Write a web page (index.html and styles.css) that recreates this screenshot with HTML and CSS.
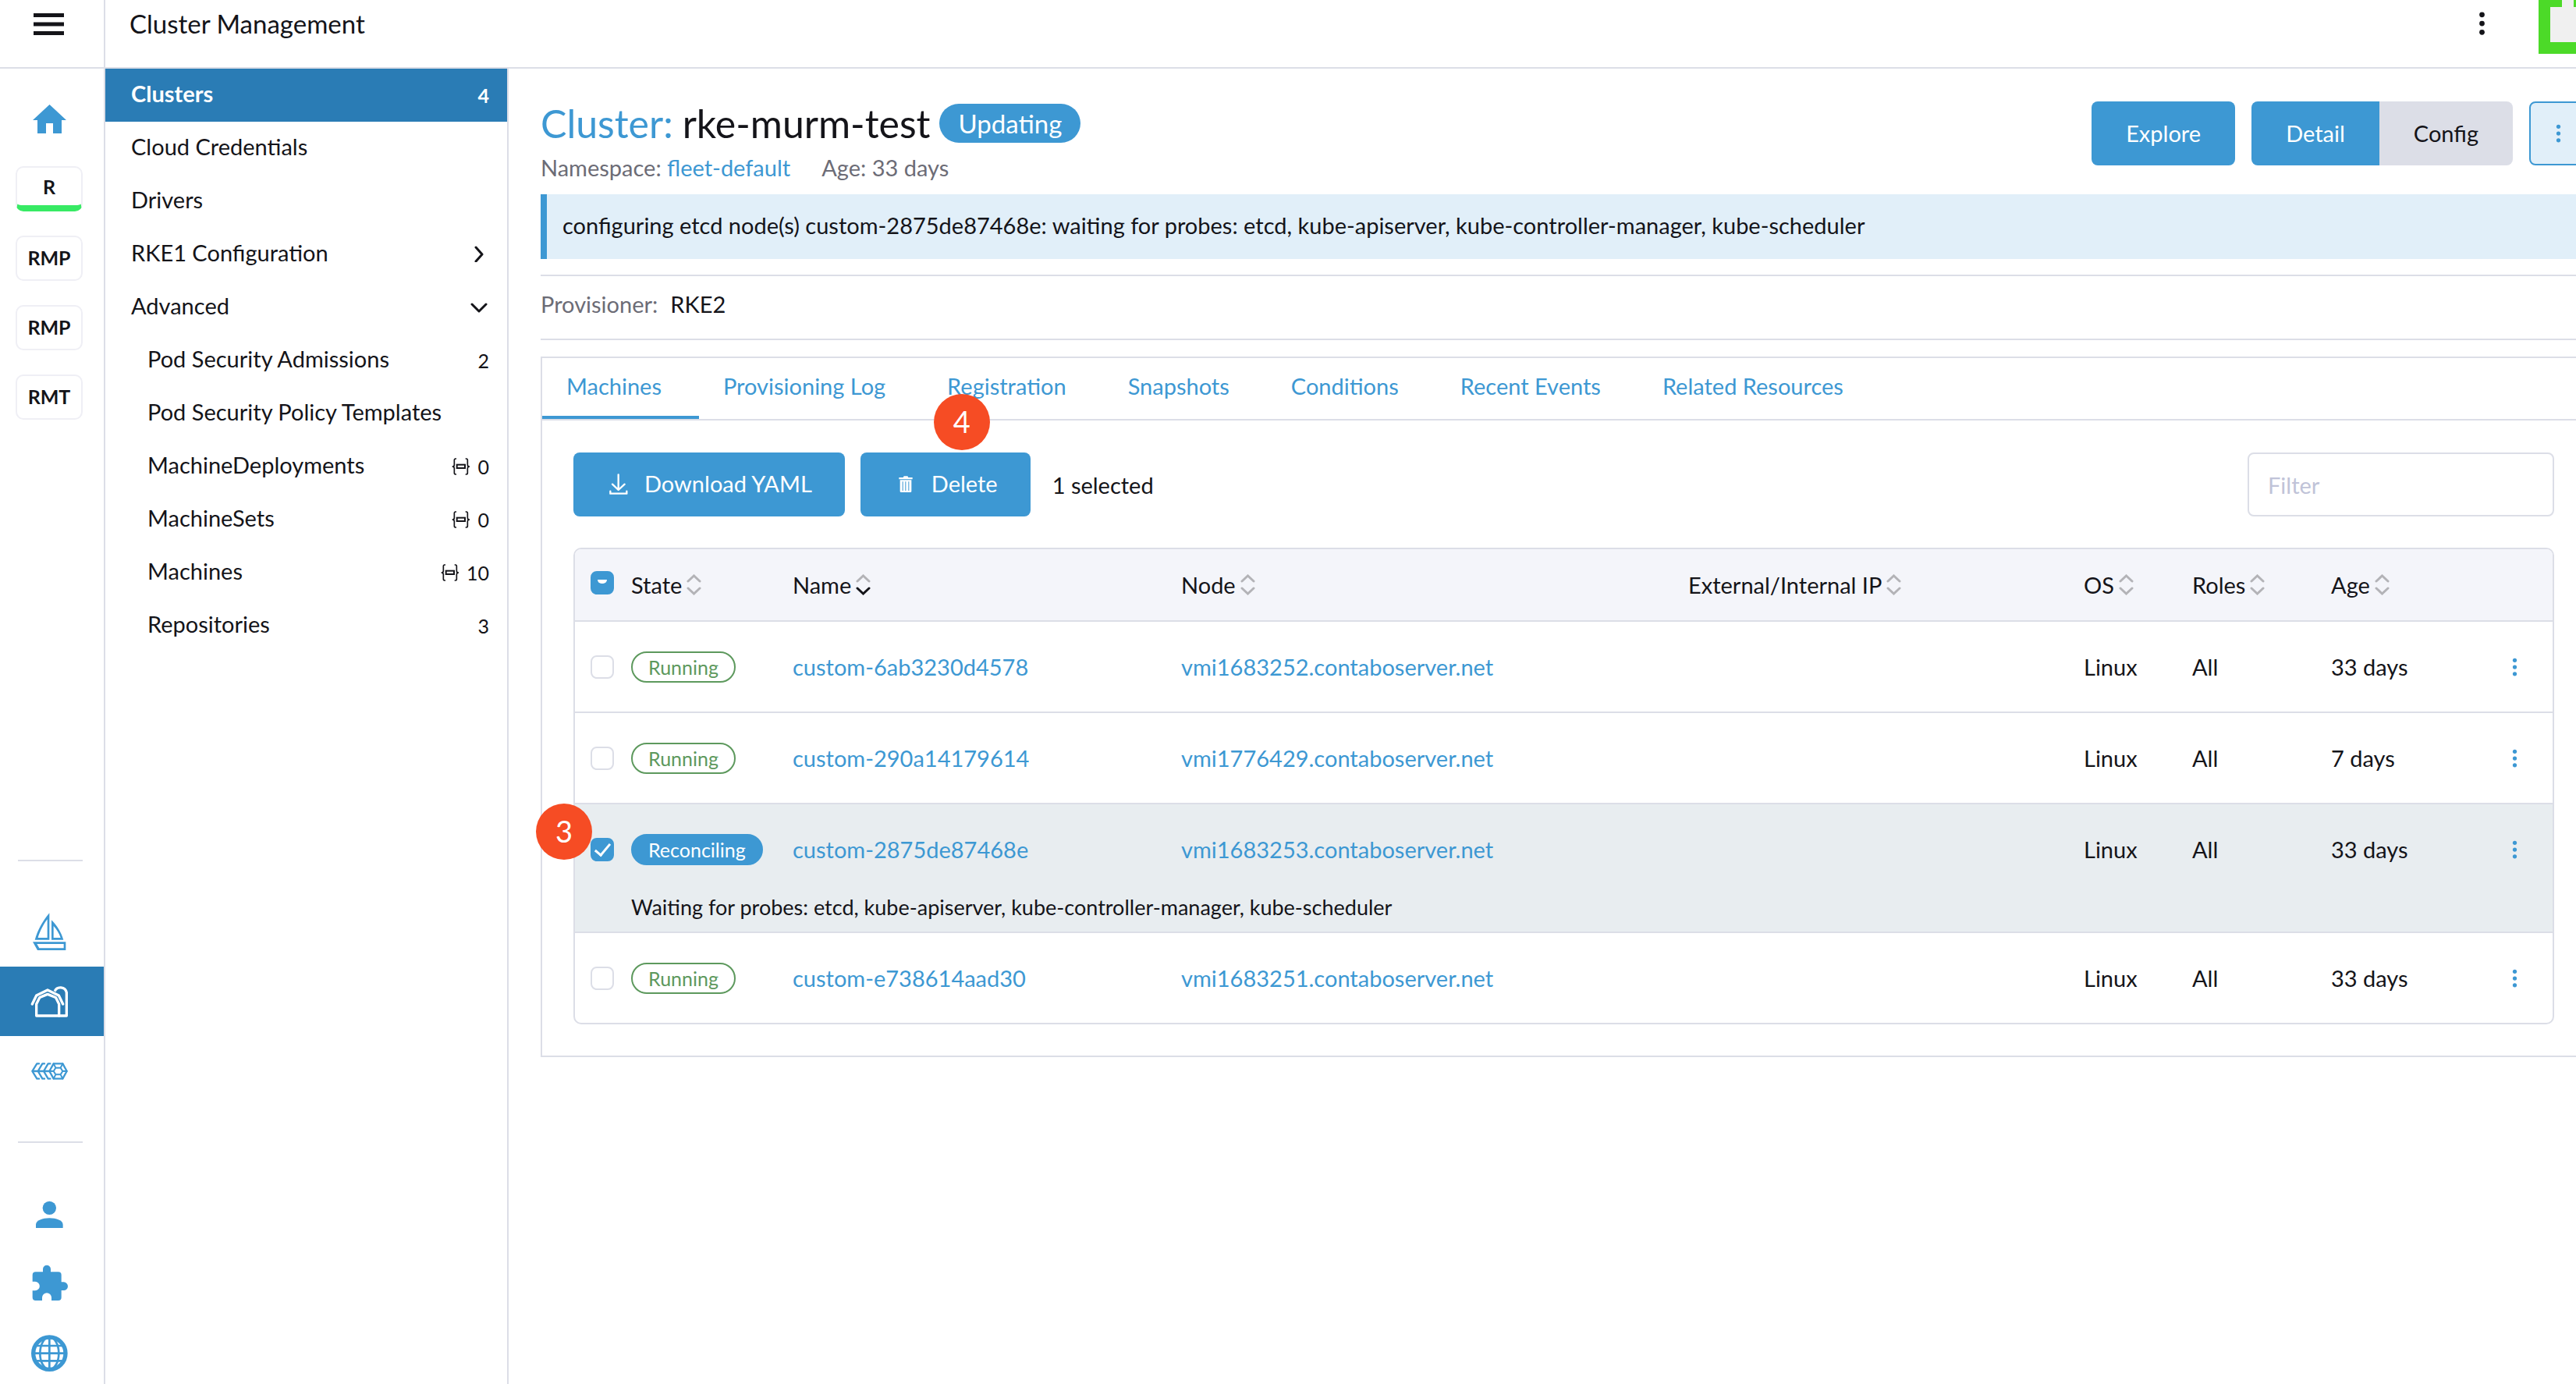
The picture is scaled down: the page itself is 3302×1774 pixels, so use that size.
FILE: index.html
```html
<!DOCTYPE html>
<html lang="en">
<head>
<meta charset="utf-8">
<title>Cluster Management</title>
<link rel="stylesheet" href="styles.css">
</head>
<body>
<svg class="sprite" aria-hidden="true">
  <symbol id="kebab" viewBox="0 0 8 28"><circle cx="4" cy="4" r="3"/><circle cx="4" cy="14" r="3"/><circle cx="4" cy="24" r="3"/></symbol>
  <symbol id="braces" viewBox="0 0 72 66"><path d="M18 3H15Q10 3 10 8V26Q10 33 2 33Q10 33 10 40V58Q10 63 15 63H18M53 3H56Q61 3 61 8V26Q61 33 69 33Q61 33 61 40V58Q61 63 56 63H53" fill="none" stroke="currentColor" stroke-width="5"/><rect x="20" y="26" width="31" height="13" fill="none" stroke="currentColor" stroke-width="6"/></symbol>
  <symbol id="sort" viewBox="0 0 19 27"><path d="M2 9L9.500 2L17 9" fill="none" stroke="#b3b3b7" stroke-width="3" stroke-linecap="round"/><path class="sort-down" d="M2 18L9.500 25L17 18" fill="none" stroke-width="3" stroke-linecap="round"/></symbol>
</svg>
<div class="app">
  <nav class="rail" aria-label="Main">
    <button class="rail-menu" aria-label="Menu"><svg width="39" height="28" viewBox="0 0 39 28"><path d="M0 2.500H39M0 14H39M0 25.500H39" stroke="#141419" stroke-width="5"/></svg></button>
    <div class="rail-top">
      <a class="rail-item" href="#" aria-label="Home"><svg width="43" height="37" viewBox="0 0 43 37"><path d="M21.500 0L43 20H37V37H26V24H17V37H6V20H0Z"/></svg></a>
      <a class="rail-item" href="#"><span class="cluster-tile local">R</span></a>
      <a class="rail-item" href="#"><span class="cluster-tile">RMP</span></a>
      <a class="rail-item" href="#"><span class="cluster-tile">RMP</span></a>
      <a class="rail-item" href="#"><span class="cluster-tile">RMT</span></a>
    </div>
    <div class="rail-bottom">
      <hr class="rail-rule">
      <a class="rail-item" href="#" aria-label="Continuous Delivery"><svg width="49" height="49" viewBox="57 61 147 147"><path fill-rule="evenodd" d="M130 62V165H74C84 130 105 90 130 62ZM122 86V157H86C93 132 107 106 122 86ZM138 89V165H184C176 138 160 110 138 89ZM146 112V157H173C167 140 158 125 146 112ZM66 173H193V205H84ZM82 181H185V197H91Z"/></svg></a>
      <a class="rail-item active" href="#" aria-label="Cluster Management"><svg width="49" height="49" viewBox="57 328 147 147"><g fill="none" stroke="#fff" stroke-width="10" stroke-linecap="round" stroke-linejoin="round"><path d="M80 457V412L93 386L123 374L154 386L167 412V457Z"/><path d="M167 457H196V368A24 24 0 0 0 150 364"/><path d="M64 412L80 379L123 358L166 379L182 412" stroke="#2a7cb5" stroke-width="15"/><path d="M64 412L80 379L123 358L166 379L182 412"/></g></svg></a>
      <a class="rail-item" href="#" aria-label="OS Management"><svg width="49" height="49" viewBox="57 595 147 147"><g fill="none" stroke="#3d98d3" stroke-width="7" stroke-linejoin="round" stroke-linecap="round"><path d="M90 641H82L64 670L82 699H90M64 670H85M111 641H103L86 670L103 699H111M86 670H107M133 641H125L108 670L125 699H133M108 670H129"/><path d="M146 641H181L197 670L181 699H146L130 670Z"/><path d="M154 657H173L181 670L173 683H154L146 670ZM146 641L154 657M181 641L173 657M181 670H197M173 683L181 699M154 683L146 699M146 670H130" stroke-width="6"/></g></svg></a>
      <hr class="rail-rule">
      <a class="rail-item" href="#" aria-label="Users"><svg width="49" height="49" viewBox="57 34 147 147"><circle cx="130" cy="86" r="26"/><path d="M78 163V150C78 134 104 125 130 125S182 134 182 150V163Z"/></svg></a>
      <a class="rail-item" href="#" aria-label="Extensions"><svg width="49" height="49" viewBox="57 301 147 147"><path d="M77 332H105V321A15 15 0 0 1 135 321V332H164Q176 332 176 344V371H185A16 16 0 0 1 185 403H176V430Q176 442 164 442H138V431A18 18 0 0 0 102 431V442H77Q65 442 65 430V404H75A17 17 0 0 0 75 369H65V344Q65 332 77 332Z"/></svg></a>
      <a class="rail-item" href="#" aria-label="Global Settings"><svg width="49" height="49" viewBox="57 568 147 147"><g fill="none" stroke="#3d98d3"><circle cx="130" cy="645" r="62" stroke-width="16"/><path d="M130 585V705M70 616H190M70 645H190M70 674H190" stroke-width="8"/><ellipse cx="130" cy="645" rx="36" ry="62" stroke-width="8"/></g></svg></a>
    </div>
  </nav>
  <header class="topbar">
    <span class="topbar-title">Cluster Management</span>
    <button class="icon-button" aria-label="Page actions"><svg width="9" height="32" fill="#141419"><use href="#kebab"/></svg></button>
    <svg class="avatar" width="48" height="69" viewBox="0 0 48 69" aria-label="User avatar"><path fill="#4cda28" d="M0 0H48V69H0Z"/><path fill="#f0f0f0" d="M15 9H30V0H45V9H48V54H15Z"/></svg>
  </header>
  <nav class="side" aria-label="Cluster Management">
    <a class="side-item active" href="#">Clusters<span class="count">4</span></a>
    <a class="side-item" href="#">Cloud Credentials</a>
    <a class="side-item" href="#">Drivers</a>
    <a class="side-item" href="#">RKE1 Configuration<svg class="chevron" width="24" height="24" viewBox="0 0 24 24"><path d="M7 5L15 14L7 23"/></svg></a>
    <a class="side-item" href="#">Advanced<svg class="chevron" width="24" height="24" viewBox="0 0 24 24"><path d="M2 10L11 19L20 10"/></svg></a>
    <a class="side-item sub" href="#">Pod Security Admissions<span class="count">2</span></a>
    <a class="side-item sub" href="#">Pod Security Policy Templates</a>
    <a class="side-item sub" href="#">MachineDeployments<span class="count"><svg width="24" height="22"><use href="#braces"/></svg>0</span></a>
    <a class="side-item sub" href="#">MachineSets<span class="count"><svg width="24" height="22"><use href="#braces"/></svg>0</span></a>
    <a class="side-item sub" href="#">Machines<span class="count"><svg width="24" height="22"><use href="#braces"/></svg>10</span></a>
    <a class="side-item sub" href="#">Repositories<span class="count">3</span></a>
  </nav>
  <main class="main">
    <div class="page">
      <div class="page-head">
        <div>
          <h1 class="title"><a href="#">Cluster:</a> rke-murm-test<span class="state-pill">Updating</span></h1>
          <div class="meta"><span>Namespace: <a href="#">fleet-default</a></span><span>Age: 33 days</span></div>
        </div>
        <div class="actions">
          <button class="btn">Explore</button>
          <div class="btn-group"><button class="btn">Detail</button><button class="btn plain">Config</button></div>
          <button class="btn more" aria-label="More actions"><svg width="7" height="26" fill="#3d98d3"><use href="#kebab"/></svg></button>
        </div>
      </div>
      <div class="banner">configuring etcd node(s) custom-2875de87468e: waiting for probes: etcd, kube-apiserver, kube-controller-manager, kube-scheduler</div>
      <div class="detail-row"><span class="muted">Provisioner:</span><span>RKE2</span></div>
      <section class="tabs">
        <div class="tab-list" role="tablist">
          <button class="tab selected" role="tab" aria-selected="true">Machines</button>
          <button class="tab" role="tab">Provisioning Log</button>
          <button class="tab" role="tab">Registration</button>
          <button class="tab" role="tab">Snapshots</button>
          <button class="tab" role="tab">Conditions</button>
          <button class="tab" role="tab">Recent Events</button>
          <button class="tab" role="tab">Related Resources</button>
        </div>
        <div class="panel">
          <div class="toolbar">
            <button class="btn with-icon"><svg width="24" height="27" viewBox="188 82 72 81"><path d="M223 86V144M200 123L223 145L247 123M192 150V159H255V150" fill="none" stroke="#fff" stroke-width="7" stroke-linecap="round" stroke-linejoin="round"/></svg>Download YAML</button>
            <div class="anchor"><button class="btn with-icon"><svg width="24" height="27" viewBox="1288 81 72 81"><path fill="#fff" d="M1298 96H1314L1317 91H1331L1334 96H1350V103H1298Z"/><path fill="#fff" fill-rule="evenodd" d="M1302 106H1346V149Q1346 153 1342 153H1306Q1302 153 1302 149ZM1311 112H1314V147H1311ZM1322 112H1325V147H1322ZM1334 112H1337V147H1334Z"/></svg>Delete</button><span class="step step-delete">4</span></div>
            <span class="selected-count">1 selected</span>
            <input class="filter" type="text" placeholder="Filter" aria-label="Filter">
          </div>
          <table class="grid">
            <colgroup><col class="c-check"><col class="c-state"><col class="c-name"><col><col class="c-ip"><col class="c-os"><col class="c-roles"><col class="c-age"><col class="c-more"></colgroup>
            <thead>
              <tr>
                <th class="check"><input type="checkbox" class="box partial" aria-label="Select all"></th>
                <th><span class="sortable">State<svg width="19" height="27"><use href="#sort"/></svg></span></th>
                <th><span class="sortable sorted">Name<svg width="19" height="27"><use href="#sort"/></svg></span></th>
                <th><span class="sortable">Node<svg width="19" height="27"><use href="#sort"/></svg></span></th>
                <th><span class="sortable">External/Internal IP<svg width="19" height="27"><use href="#sort"/></svg></span></th>
                <th><span class="sortable">OS<svg width="19" height="27"><use href="#sort"/></svg></span></th>
                <th><span class="sortable">Roles<svg width="19" height="27"><use href="#sort"/></svg></span></th>
                <th><span class="sortable">Age<svg width="19" height="27"><use href="#sort"/></svg></span></th>
                <th></th>
              </tr>
            </thead>
            <tbody>
              <tr>
                <td class="check"><input type="checkbox" class="box" aria-label="Select custom-6ab3230d4578"></td>
                <td><span class="badge">Running</span></td><td><a href="#">custom-6ab3230d4578</a></td><td><a href="#">vmi1683252.contaboserver.net</a></td><td></td><td>Linux</td><td>All</td><td>33 days</td>
                <td class="more-cell"><button class="icon-button" aria-label="Row actions"><svg width="7" height="26" fill="#3d98d3"><use href="#kebab"/></svg></button></td>
              </tr>
              <tr>
                <td class="check"><input type="checkbox" class="box" aria-label="Select custom-290a14179614"></td>
                <td><span class="badge">Running</span></td><td><a href="#">custom-290a14179614</a></td><td><a href="#">vmi1776429.contaboserver.net</a></td><td></td><td>Linux</td><td>All</td><td>7 days</td>
                <td class="more-cell"><button class="icon-button" aria-label="Row actions"><svg width="7" height="26" fill="#3d98d3"><use href="#kebab"/></svg></button></td>
              </tr>
              <tr class="picked has-message">
                <td class="check"><input type="checkbox" class="box" checked aria-label="Select custom-2875de87468e"><span class="step step-select">3</span></td>
                <td><span class="badge busy">Reconciling</span></td><td><a href="#">custom-2875de87468e</a></td><td><a href="#">vmi1683253.contaboserver.net</a></td><td></td><td>Linux</td><td>All</td><td>33 days</td>
                <td class="more-cell"><button class="icon-button" aria-label="Row actions"><svg width="7" height="26" fill="#3d98d3"><use href="#kebab"/></svg></button></td>
              </tr>
              <tr class="picked message">
                <td></td><td colspan="8">Waiting for probes: etcd, kube-apiserver, kube-controller-manager, kube-scheduler</td>
              </tr>
              <tr>
                <td class="check"><input type="checkbox" class="box" aria-label="Select custom-e738614aad30"></td>
                <td><span class="badge">Running</span></td><td><a href="#">custom-e738614aad30</a></td><td><a href="#">vmi1683251.contaboserver.net</a></td><td></td><td>Linux</td><td>All</td><td>33 days</td>
                <td class="more-cell"><button class="icon-button" aria-label="Row actions"><svg width="7" height="26" fill="#3d98d3"><use href="#kebab"/></svg></button></td>
              </tr>
            </tbody>
          </table>
        </div>
      </section>
    </div>
  </main>
</div>
</body>
</html>
```
FILE: styles.css
```css
:root {
  --primary: #3d98d3;
  --active: #2a7cb5;
  --text: #141419;
  --muted: #6c6c76;
  --border: #dcdee7;
  --success: #5d995d;
}

* { box-sizing: border-box; }

body {
  margin: 0;
  background: #fff;
  color: var(--text);
  font: 29px/36px Lato, sans-serif;
  overflow: hidden;
}

a { color: var(--primary); text-decoration: none; }
button, input { font: inherit; color: inherit; margin: 0; }
button { border: 0; background: none; padding: 0; cursor: pointer; }
svg { display: block; flex: none; }
.sprite { position: absolute; width: 0; height: 0; }
.sort-down { stroke: var(--sort-down, #b3b3b7); }

.app {
  display: grid;
  grid-template-columns: 135px 517px minmax(0, 1fr);
  grid-template-rows: 88px minmax(0, 1fr);
  height: 100vh;
}

/* Icon rail */
.rail {
  grid-row: 1 / 3;
  display: flex;
  flex-direction: column;
  border-right: 2px solid var(--border);
}
.rail-menu {
  flex: none;
  display: flex;
  align-items: center;
  justify-content: center;
  height: 88px;
  padding: 0 8px 24px 0;
  border-bottom: 2px solid var(--border);
}
.rail-top { padding-top: 20px; }
.rail-bottom { margin: auto 0 -4px; }
.rail-item {
  display: flex;
  align-items: center;
  justify-content: center;
  height: 89px;
  padding-right: 7px;
  color: var(--text);
  fill: var(--primary);
}
.rail-item.active { background: var(--active); }
.cluster-tile {
  width: 86px;
  height: 58px;
  border: 2px solid #efeff5;
  border-radius: 10px;
  font-size: 25px;
  font-weight: 700;
  line-height: 52px;
  text-align: center;
}
.cluster-tile.local { border-bottom: 8px solid #37ea64; line-height: 48px; }
.rail-rule {
  height: 2px;
  margin: 46px 27px 46px 23px;
  border: 0;
  background: var(--border);
}

/* Top bar */
.topbar {
  grid-column: 2 / 4;
  display: flex;
  align-items: flex-start;
  border-bottom: 2px solid var(--border);
}
.topbar-title { flex: 1; padding-left: 31px; font-size: 33px; line-height: 60px; }
.icon-button { display: inline-flex; align-items: center; justify-content: center; }
.topbar .icon-button { height: 60px; margin-right: 68px; }

/* Side navigation */
.side { border-right: 2px solid var(--border); }
.side-item {
  display: flex;
  align-items: center;
  justify-content: space-between;
  height: 68px;
  padding: 0 23px 4px 33px;
  color: var(--text);
}
.side-item.sub { padding-left: 54px; }
.side-item.active { background: var(--active); color: #fff; font-weight: 700; }
.count { display: flex; align-items: center; gap: 9px; padding-top: 4px; font-size: 25px; }
.chevron {
  fill: none;
  stroke: var(--text);
  stroke-width: 3;
  stroke-linecap: round;
  stroke-linejoin: round;
}

/* Page */
.main { min-width: 0; padding: 40px 0 0 41px; }
.page { margin-right: -14px; }
.page-head { display: flex; justify-content: space-between; align-items: flex-start; }
.title {
  display: flex;
  align-items: center;
  gap: 12px;
  margin: 0 0 9px;
  font-size: 50px;
  font-weight: 400;
  line-height: 60px;
}
.state-pill {
  height: 50px;
  padding: 0 24px;
  border-radius: 25px;
  background: var(--primary);
  color: #fff;
  font-size: 33px;
  line-height: 50px;
}
.meta { display: flex; gap: 40px; color: var(--muted); }
.muted { color: var(--muted); }
.actions { display: flex; gap: 21px; padding-top: 2px; }
.btn {
  display: flex;
  align-items: center;
  justify-content: center;
  height: 82px;
  padding: 0 44px;
  border-radius: 8px;
  background: var(--primary);
  color: #fff;
}
.btn-group { display: flex; border-radius: 8px; overflow: hidden; }
.btn-group .btn { border-radius: 0; }
.btn.plain { background: var(--border); color: var(--text); }
.btn.more { width: 74px; padding: 0; border: 2px solid var(--primary); background: #e1eff9; }
.btn.with-icon { gap: 21px; padding: 0 42px 2px 46px; }

.banner {
  margin-top: 16px;
  padding: 0 20px 3px;
  border-left: 8px solid var(--primary);
  background: #e1eff9;
  line-height: 80px;
}
.detail-row {
  display: flex;
  gap: 16px;
  margin-top: 20px;
  padding: 18px 0 26px;
  border: solid var(--border);
  border-width: 2px 0;
}

/* Tabs */
.tabs { margin-top: 21px; border: 2px solid var(--border); }
.tab-list { display: flex; border-bottom: 2px solid var(--border); }
.tab {
  height: 78px;
  padding: 0 48px 2px 31px;
  border-bottom: 4px solid transparent;
  color: var(--primary);
}
.tab.selected { border-color: var(--primary); }
.panel { padding: 41px 40px 40px; }
.toolbar { display: flex; align-items: center; gap: 20px; margin-bottom: 40px; }
.anchor { position: relative; }
.selected-count { flex: 1; padding: 2px 0 0 8px; }
.filter {
  width: 393px;
  height: 82px;
  padding: 0 24px;
  border: 2px solid var(--border);
  border-radius: 8px;
  background: #fff;
}
.filter::placeholder { color: #c0c3d8; opacity: 1; }

/* Machine table */
.grid {
  width: 100%;
  table-layout: fixed;
  border: 2px solid var(--border);
  border-radius: 10px;
  border-spacing: 0;
}
.c-check { width: 61px; }
.c-state { width: 207px; }
.c-name { width: 498px; }
.c-ip { width: 20%; }
.c-os { width: 139px; }
.c-roles { width: 178px; }
.c-age { width: 198px; }
.c-more { width: 97px; }
.grid th, .grid td {
  padding: 0 0 0 11px;
  border-bottom: 2px solid var(--border);
  font-weight: 400;
  text-align: left;
  white-space: nowrap;
}
.grid th { height: 93px; background: #f4f5fa; }
.grid th:first-child { border-top-left-radius: 8px; }
.grid th:last-child { border-top-right-radius: 8px; }
.grid td { height: 117px; }
.grid tbody tr:last-child td { height: 115px; border-bottom: 0; }
.grid .check { position: relative; padding-left: 20px; }
.grid th.check { padding-bottom: 6px; }
.grid .more-cell { padding: 0 0 6px; text-align: center; }
.picked { background: #e8edf0; }
.grid .has-message td { height: 115px; border-bottom: 0; }
.grid .message td { height: 50px; padding-bottom: 15px; font-size: 27px; line-height: 33px; }
.sortable { display: flex; align-items: center; gap: 6px; }
.sorted { --sort-down: #141419; }
.more-cell .icon-button { vertical-align: middle; }

.badge {
  display: inline-block;
  height: 40px;
  padding: 0 20px;
  border: 2px solid var(--success);
  border-radius: 20px;
  color: var(--success);
  font-size: 25px;
  line-height: 37px;
  vertical-align: middle;
}
.badge.busy { border-color: var(--primary); background: var(--primary); color: #fff; }

.box {
  appearance: none;
  display: grid;
  place-items: center;
  width: 30px;
  height: 30px;
  border: 2px solid var(--border);
  border-radius: 8px;
  background: #fff;
}
.box:checked, .box.partial { border-color: var(--primary); background: var(--primary); }
.box:checked::before {
  content: "";
  width: 8px;
  height: 17px;
  margin-bottom: 4px;
  border: solid #fff;
  border-width: 0 3px 3px 0;
  transform: rotate(40deg);
}
.box.partial::before {
  content: "";
  width: 12px;
  height: 5px;
  margin-bottom: 3px;
  border-radius: 0 0 6px 6px;
  background: #fff;
}

/* Numbered walkthrough markers */
.step {
  position: absolute;
  z-index: 1;
  width: 72px;
  height: 72px;
  border-radius: 50%;
  background: #f64c24;
  color: #fff;
  font-size: 38px;
  line-height: 70px;
  text-align: center;
}
.step-delete { left: 94px; top: -75px; }
.step-select { left: -50px; top: -1px; }
```
